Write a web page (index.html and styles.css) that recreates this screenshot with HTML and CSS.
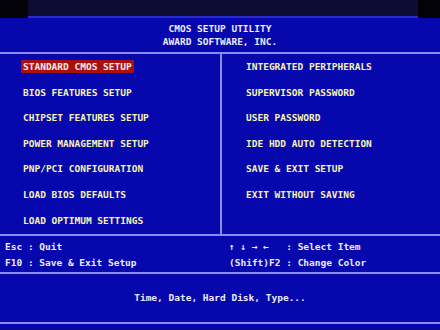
FILE: index.html
```html
<!DOCTYPE html>
<html>
<head lang="en">
    <meta charset="UTF-8">
    <title>CMOS Setup Utility</title>
    <link rel="stylesheet" href="styles.css">
</head>
<body>
<div id="screen">
    <div class="top">
        <div class="edge"></div>
        <div class="crt"></div>
        <div class="edge right"></div>
    </div>
    <div class="head">
        <p>CMOS SETUP UTILITY</p>
        <p>AWARD SOFTWARE, INC.</p>
    </div>
    <div class="menu">
        <ul class="col">
            <li><span class="active">STANDARD CMOS SETUP</span></li>
            <li>BIOS FEATURES SETUP</li>
            <li>CHIPSET FEATURES SETUP</li>
            <li>POWER MANAGEMENT SETUP</li>
            <li>PNP/PCI CONFIGURATION</li>
            <li>LOAD BIOS DEFAULTS</li>
            <li>LOAD OPTIMUM SETTINGS</li>
        </ul>
        <ul class="col">
            <li>INTEGRATED PERIPHERALS</li>
            <li>SUPERVISOR PASSWORD</li>
            <li>USER PASSWORD</li>
            <li>IDE HDD AUTO DETECTION</li>
            <li>SAVE &amp; EXIT SETUP</li>
            <li>EXIT WITHOUT SAVING</li>
        </ul>
    </div>
    <div class="keys">
        <p>Esc : Quit</p>
        <p>↑ ↓ → ←   : Select Item</p>
        <p>F10 : Save &amp; Exit Setup</p>
        <p>(Shift)F2 : Change Color</p>
    </div>
    <div class="help">Time, Date, Hard Disk, Type...</div>
</div>
</body>
</html>
```

FILE: styles.css
```css
*{padding: 0;margin: 0;list-style: none;box-sizing: border-box;}
body{background: #000;}
#screen{width: 440px;height: 330px;background: #0707ae;color: #ecebff;font: bold 9.5px "DejaVu Sans Mono", monospace;overflow: hidden;}
.top{height: 18px;display: flex;}
.top .edge{width: 28px;background: #020208;}
.top .edge.right{width: 22px;}
.top .crt{flex: 1;background: #0c0c34;border-bottom: 2px solid #2a2ad0;}
.head{height: 36px;padding-top: 4px;text-align: center;line-height: 13px;border-bottom: 2px solid #8c8cec;}
.menu{height: 182px;display: grid;grid-template-columns: 222px 1fr;border-bottom: 2px solid #8c8cec;}
.col{color: #f6f2b8;line-height: 25.6px;padding-left: 23px;white-space: nowrap;}
.col:first-child{border-right: 2px solid #8c8cec;}
.col + .col{padding-left: 24px;}
.active{background: #a81010;color: #ffe6e0;padding: 1px 2px;margin-left: -2px;}
.keys{height: 38px;padding: 4px 0 0 5px;display: grid;grid-template-columns: 224px 1fr;line-height: 13px;border-bottom: 2px solid #8c8cec;}
.keys p{white-space: pre;}
.help{height: 50px;line-height: 48px;text-align: center;border-bottom: 2px solid #8c8cec;}
```
